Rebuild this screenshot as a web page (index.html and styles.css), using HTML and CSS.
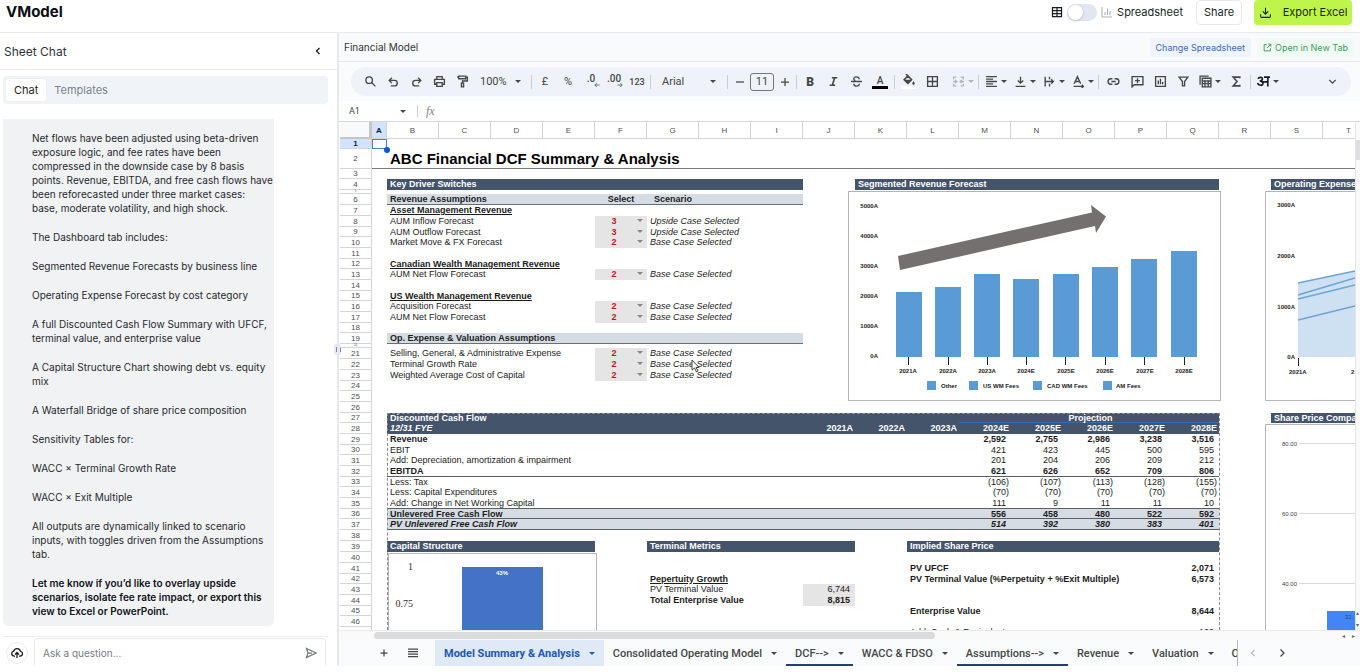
FILE: index.html
```
<!DOCTYPE html>
<html lang="en">
<head>
<meta charset="utf-8">
<title>VModel</title>
<link rel="stylesheet" href="styles.css">
</head>
<body>
<div class="app">
  <header class="topbar">
    <h1 class="brand">VModel</h1>
    <div class="topbar-actions">
      <label class="view-switch">
        <svg class="icon i12" viewBox="0 0 24 24"><path class="thick" d="M3 3h18v18H3zM3 9h18M3 15h18M12 3v18"/></svg>
        <input type="checkbox" role="switch" class="switch">
        <svg class="icon i12 muted" viewBox="0 0 24 24"><path d="M2 2v20h20M8 18v-6M13 18V5M18 18v-8"/></svg>
        <span>Spreadsheet</span>
      </label>
      <button class="btn btn-share">Share</button>
      <button class="btn btn-export"><svg class="icon i13" viewBox="0 0 24 24"><path d="M12 3v12M7 10l5 5 5-5M3 15v4a2 2 0 0 0 2 2h14a2 2 0 0 0 2-2v-4"/></svg>Export Excel</button>
    </div>
  </header>
  <div class="workspace">
    <aside class="chat">
      <div class="chat-head">
        <h2>Sheet Chat</h2>
        <button class="ghost" aria-label="Collapse"><svg class="icon i12 dark" viewBox="0 0 24 24"><path class="thick" d="M15 6l-6 6 6 6"/></svg></button>
      </div>
      <div class="chat-tabs">
        <button class="chat-tab active">Chat</button>
        <button class="chat-tab">Templates</button>
      </div>
      <div class="messages">
        <div class="message">
          <p>Net flows have been adjusted using beta-driven<br>exposure logic, and fee rates have been<br>compressed in the downside case by 8 basis<br>points. Revenue, EBITDA, and free cash flows have<br>been reforecasted under three market cases:<br>base, moderate volatility, and high shock.</p>
          <p>The Dashboard tab includes:</p>
          <p>Segmented Revenue Forecasts by business line</p>
          <p>Operating Expense Forecast by cost category</p>
          <p>A full Discounted Cash Flow Summary with UFCF,<br>terminal value, and enterprise value</p>
          <p>A Capital Structure Chart showing debt vs. equity<br>mix</p>
          <p>A Waterfall Bridge of share price composition</p>
          <p>Sensitivity Tables for:</p>
          <p>WACC × Terminal Growth Rate</p>
          <p>WACC × Exit Multiple</p>
          <p>All outputs are dynamically linked to scenario<br>inputs, with toggles driven from the Assumptions<br>tab.</p>
          <p class="strong">Let me know if you’d like to overlay upside<br>scenarios, isolate fee rate impact, or export this<br>view to Excel or PowerPoint.</p>
        </div>
      </div>
      <form class="composer">
        <button type="button" class="upload" aria-label="Upload"><svg class="icon i12 dark" viewBox="0 0 24 24"><path class="thick" d="M8 18H6a5 5 0 0 1-.5-9.900A7 7 0 0 1 19 9a4.500 4.500 0 0 1-1 9h-2M12 22V12M8 15l4-4 4 4"/></svg></button>
        <div class="ask">
          <input type="text" placeholder="Ask a question..." aria-label="Ask a question">
          <button type="button" class="ghost" aria-label="Send"><svg class="icon i12 mid" viewBox="0 0 24 24"><path class="thick" d="M3 3l19 9-19 9 3-9zM6 12h8"/></svg></button>
        </div>
      </form>
      <div class="splitter"></div>
    </aside>
    <main class="sheet-pane">
      <div class="doc-bar">
        <h2>Financial Model</h2>
        <div class="doc-actions">
          <button class="pill pill-blue">Change Spreadsheet</button>
          <a class="pill pill-green" href="#"><svg class="icon i9" viewBox="0 0 24 24"><path class="thick" d="M10 4H3v17h17v-7M14 3h7v7M21 3l-10 10"/></svg>Open in New Tab</a>
        </div>
      </div>
      <div class="toolbar-wrap">
        <div class="toolbar">
          <button class="tool" aria-label="Search"><svg class="icon i13" viewBox="0 0 24 24"><path class="thick" d="M14 14l7 7"/><circle class="thick" cx="9.500" cy="9.500" r="6"/></svg></button>
          <button class="tool" aria-label="Undo"><svg class="icon i13" viewBox="0 0 24 24"><path class="thick" d="M9 5L4 10l5 5M5 10h9a5 5 0 0 1 0 10H7"/></svg></button>
          <button class="tool" aria-label="Redo"><svg class="icon i13" viewBox="0 0 24 24"><path class="thick" d="M15 5l5 5-5 5M19 10h-9a5 5 0 0 0 0 10h7"/></svg></button>
          <button class="tool" aria-label="Print"><svg class="icon i13" viewBox="0 0 24 24"><path class="thick" d="M7 8V3h10v5M7 17H3V8h18v9h-4M7 14h10v7H7z"/></svg></button>
          <button class="tool" aria-label="Paint format"><svg class="icon i13" viewBox="0 0 24 24"><path class="thick" d="M5 2h13v5H5zM18 4h3v7h-9v4M10 15h4v7h-4zM2 4h3"/></svg></button>
          <div class="drop drop-zoom"><select aria-label="Zoom"><option>100%</option></select><i class="caret"></i></div>
          <i class="sep"></i>
          <button class="tool">£</button>
          <button class="tool">%</button>
          <button class="tool dec" aria-label="Decrease decimals">.0<svg class="icon i6" viewBox="0 0 24 24"><path class="heavy" d="M22 12H4M11 4l-8 8 8 8"/></svg></button>
          <button class="tool dec" aria-label="Increase decimals">.00<svg class="icon i6" viewBox="0 0 24 24"><path class="heavy" d="M2 12h18M13 4l8 8-8 8"/></svg></button>
          <button class="tool small">123</button>
          <i class="sep"></i>
          <div class="drop drop-font"><select aria-label="Font"><option>Arial</option></select><i class="caret"></i></div>
          <i class="sep"></i>
          <button class="tool tight" aria-label="Smaller"><svg class="icon i12" viewBox="0 0 24 24"><path class="thick" d="M4 12h16"/></svg></button>
          <input class="size" type="text" value="11" aria-label="Font size">
          <button class="tool tight" aria-label="Larger"><svg class="icon i12" viewBox="0 0 24 24"><path class="thick" d="M4 12h16M12 4v16"/></svg></button>
          <i class="sep"></i>
          <button class="tool bold">B</button>
          <button class="tool" aria-label="Italic"><svg class="icon i13" viewBox="0 0 24 24"><path class="heavy" d="M9 5h10M5 19h10M14 5l-4 14"/></svg></button>
          <button class="tool" aria-label="Strikethrough"><svg class="icon i13" viewBox="0 0 24 24"><path class="thick" d="M2 12h20M17 8c0-6-10-6-10-1 0 2 1 3 3 3M7 16c0 6 11 6 10 0"/></svg></button>
          <button class="tool wide color">A</button>
          <i class="sep"></i>
          <button class="tool" aria-label="Fill color"><svg class="icon i15" viewBox="0 0 24 24"><path class="thick" d="M8 0l3 3M11 3l6 6-6 6-6-6z"/><path class="solid" d="M5 9h12l-6 6zM20 11c3 4 2 6 0 6s-3-2 0-6z"/><path class="white" d="M0 22h24"/></svg></button>
          <button class="tool wide" aria-label="Borders"><svg class="icon i13" viewBox="0 0 24 24"><path class="thick" d="M3 3h18v18H3zM12 3v18M3 12h18"/></svg></button>
          <button class="tool menu merge" aria-label="Merge"><svg class="icon i13" viewBox="0 0 24 24"><path class="thick" d="M8 4H3v4M3 16v4h5M16 4h5v4M21 16v4h-5M2 12h7M6 9l3 3-3 3M22 12h-7M18 9l-3 3 3 3"/></svg><i class="caret"></i></button>
          <i class="sep"></i>
          <button class="tool menu" aria-label="Align"><svg class="icon i13" viewBox="0 0 24 24"><path class="thick" d="M2 3h20M2 7.500h13M2 12h20M2 16.500h13M2 21h20"/></svg><i class="caret"></i></button>
          <button class="tool menu" aria-label="Vertical align"><svg class="icon i13" viewBox="0 0 24 24"><path class="thick" d="M12 3v12M7 10l5 5 5-5M3 21h18"/></svg><i class="caret"></i></button>
          <button class="tool menu" aria-label="Wrap"><svg class="icon i13" viewBox="0 0 24 24"><path class="thick" d="M4 3v18M12 3v5M12 16v5M5 12h14M15 8l4 4-4 4"/></svg><i class="caret"></i></button>
          <button class="tool menu" aria-label="Rotate"><svg class="icon i13" viewBox="0 0 24 24"><path class="thick" d="M4 16L10 3l6 13M6 12h8M3 21h17M18 18l3 3-3 3"/></svg><i class="caret"></i></button>
          <i class="sep"></i>
          <button class="tool wide" aria-label="Link"><svg class="icon i13" viewBox="0 0 24 24"><path class="thick" d="M10 7H7a5 5 0 0 0 0 10h3M14 7h3a5 5 0 0 1 0 10h-3M8 12h8"/></svg></button>
          <button class="tool" aria-label="Comment"><svg class="icon i13" viewBox="0 0 24 24"><path class="thick" d="M2 22V3h20v15H6zM12 6v9M7.500 10.500h9"/></svg></button>
          <button class="tool" aria-label="Chart"><svg class="icon i13" viewBox="0 0 24 24"><path class="thick" d="M3 3h18v18H3zM8 17v-7M12 17V7M16 17v-4"/></svg></button>
          <button class="tool" aria-label="Filter"><svg class="icon i13" viewBox="0 0 24 24"><path class="thick" d="M4 4h16l-6 8v8h-4v-8z"/></svg></button>
          <button class="tool menu" aria-label="Table views"><svg class="icon i13" viewBox="0 0 24 24"><path class="thick" d="M2 18V2h16M6 6h16v16H6zM6 11h16M6 16h16M11 11v11M17 11v11"/></svg><i class="caret"></i></button>
          <button class="tool wide" aria-label="Functions"><svg class="icon i13" viewBox="0 0 24 24"><path class="heavy" d="M18 6V4H6l7 8-7 8h12v-2"/></svg></button>
          <i class="sep"></i>
          <button class="tool menu" aria-label="Input tools"><svg class="icon i13 dark" viewBox="0 0 24 24"><path class="heavy" d="M13 4h11M20 4v17M2 7c1-3 8-4 8 0 0 3-3 4-5 4 7 0 8 8 2 8-3 0-5-1-6-4M9 12c4 2 7 1 11 0"/></svg><i class="caret"></i></button>
          <button class="tool last" aria-label="More"><svg class="icon i13" viewBox="0 0 24 24"><path class="thick" d="M6 9l6 6 6-6"/></svg></button>
        </div>
      </div>
      <div class="formula-bar">
        <input class="name-box" type="text" value="A1" aria-label="Cell">
        <i class="caret"></i>
        <i class="sep"></i>
        <label class="fx" for="formula">fx</label>
        <input class="formula" id="formula" type="text">
      </div>
      <div class="grid-wrap">
        <div class="grid">
          <table class="sheet">
            <colgroup><col class="c-head"><col class="c-a"><col span="19" class="c"></colgroup>
            <thead><tr><th class="corner"></th><th class="sel">A</th><th>B</th><th>C</th><th>D</th><th>E</th><th>F</th><th>G</th><th>H</th><th>I</th><th>J</th><th>K</th><th>L</th><th>M</th><th>N</th><th>O</th><th>P</th><th>Q</th><th>R</th><th>S</th><th>T</th></tr></thead>
            <tbody>
              <tr><th class="sel">1</th><td class="cursor-cell"></td><td colspan="19"></td></tr>
              <tr class="title"><th>2</th><td></td><td colspan="19">ABC Financial DCF Summary &amp; Analysis</td></tr>
              <tr><th>3</th><td colspan="20"></td></tr>
              <tr><th>4</th><td></td><td class="head" colspan="8">Key Driver Switches</td><td></td><td class="head" colspan="7">Segmented Revenue Forecast</td><td></td><td class="head" colspan="2">Operating Expense</td></tr>
              <tr class="thin"><th>5</th><td colspan="20"></td></tr>
              <tr class="sub"><th>6</th><td></td><td class="band" colspan="4">Revenue Assumptions</td><td class="band center">Select</td><td class="band center">Scenario</td><td class="band" colspan="2"></td><td colspan="11"></td></tr>
              <tr><th>7</th><td></td><td class="under" colspan="19">Asset Management Revenue</td></tr>
              <tr><th>8</th><td></td><td colspan="4">AUM Inflow Forecast</td><td class="pick"><select aria-label="AUM inflow case"><option>3</option></select></td><td class="it" colspan="14">Upside Case Selected</td></tr>
              <tr><th>9</th><td></td><td colspan="4">AUM Outflow Forecast</td><td class="pick"><select aria-label="AUM outflow case"><option>3</option></select></td><td class="it" colspan="14">Upside Case Selected</td></tr>
              <tr><th>10</th><td></td><td colspan="4">Market Move &amp; FX Forecast</td><td class="pick"><select aria-label="Market move case"><option>2</option></select></td><td class="it" colspan="14">Base Case Selected</td></tr>
              <tr><th>11</th><td colspan="20"></td></tr>
              <tr><th>12</th><td></td><td class="under" colspan="19">Canadian Wealth Management Revenue</td></tr>
              <tr><th>13</th><td></td><td colspan="4">AUM Net Flow Forecast</td><td class="pick"><select aria-label="Canadian net flow case"><option>2</option></select></td><td class="it" colspan="14">Base Case Selected</td></tr>
              <tr><th>14</th><td colspan="20"></td></tr>
              <tr><th>15</th><td></td><td class="under" colspan="19">US Wealth Management Revenue</td></tr>
              <tr><th>16</th><td></td><td colspan="4">Acquisition Forecast</td><td class="pick"><select aria-label="Acquisition case"><option>2</option></select></td><td class="it" colspan="14">Base Case Selected</td></tr>
              <tr><th>17</th><td></td><td colspan="4">AUM Net Flow Forecast</td><td class="pick"><select aria-label="US net flow case"><option>2</option></select></td><td class="it" colspan="14">Base Case Selected</td></tr>
              <tr><th>18</th><td colspan="20"></td></tr>
              <tr class="sub"><th>19</th><td></td><td class="band" colspan="8">Op. Expense &amp; Valuation Assumptions</td><td colspan="11"></td></tr>
              <tr class="thin"><th>20</th><td colspan="20"></td></tr>
              <tr class="sub"><th>21</th><td></td><td colspan="4">Selling, General, &amp; Administrative Expense</td><td class="pick"><select aria-label="SG&amp;A case"><option>2</option></select></td><td class="it" colspan="14">Base Case Selected</td></tr>
              <tr><th>22</th><td></td><td colspan="4">Terminal Growth Rate</td><td class="pick"><select aria-label="Terminal growth case"><option>2</option></select></td><td class="it" colspan="14">Base Case Selected</td></tr>
              <tr><th>23</th><td></td><td colspan="4">Weighted Average Cost of Capital</td><td class="pick"><select aria-label="WACC case"><option>2</option></select></td><td class="it" colspan="14">Base Case Selected</td></tr>
              <tr><th>24</th><td colspan="20"></td></tr>
              <tr><th>25</th><td colspan="20"></td></tr>
              <tr><th>26</th><td colspan="20"></td></tr>
              <tr><th>27</th><td></td><td class="head" colspan="11">Discounted Cash Flow</td><td class="head projection" colspan="5">Projection</td><td></td><td class="head" colspan="2">Share Price Compar</td></tr>
              <tr class="years"><th>28</th><td></td><td class="head it" colspan="8">12/31 FYE</td><td class="head">2021A</td><td class="head">2022A</td><td class="head">2023A</td><td class="head">2024E</td><td class="head">2025E</td><td class="head">2026E</td><td class="head">2027E</td><td class="head">2028E</td><td colspan="3"></td></tr>
              <tr class="nums b"><th>29</th><td></td><td colspan="11">Revenue</td><td>2,592</td><td>2,755</td><td>2,986</td><td>3,238</td><td>3,516</td><td colspan="3"></td></tr>
              <tr class="nums"><th>30</th><td></td><td colspan="11">EBIT</td><td>421</td><td>423</td><td>445</td><td>500</td><td>595</td><td colspan="3"></td></tr>
              <tr class="nums"><th>31</th><td></td><td colspan="11">Add: Depreciation, amortization &amp; impairment</td><td>201</td><td>204</td><td>206</td><td>209</td><td>212</td><td colspan="3"></td></tr>
              <tr class="nums b line"><th>32</th><td></td><td colspan="11">EBITDA</td><td>621</td><td>626</td><td>652</td><td>709</td><td>806</td><td colspan="3"></td></tr>
              <tr class="nums neg"><th>33</th><td></td><td colspan="11">Less: Tax</td><td>(106)</td><td>(107)</td><td>(113)</td><td>(128)</td><td>(155)</td><td colspan="3"></td></tr>
              <tr class="nums neg"><th>34</th><td></td><td colspan="11">Less: Capital Expenditures</td><td>(70)</td><td>(70)</td><td>(70)</td><td>(70)</td><td>(70)</td><td colspan="3"></td></tr>
              <tr class="nums line"><th>35</th><td></td><td colspan="11">Add: Change in Net Working Capital</td><td>111</td><td>9</td><td>11</td><td>11</td><td>10</td><td colspan="3"></td></tr>
              <tr class="nums b line shade"><th>36</th><td></td><td colspan="11">Unlevered Free Cash Flow</td><td>556</td><td>458</td><td>480</td><td>522</td><td>592</td><td colspan="3"></td></tr>
              <tr class="nums b line shade slant"><th>37</th><td></td><td colspan="11">PV Unlevered Free Cash Flow</td><td>514</td><td>392</td><td>380</td><td>383</td><td>401</td><td colspan="3"></td></tr>
              <tr><th>38</th><td colspan="20"></td></tr>
              <tr class="sub"><th>39</th><td></td><td class="head" colspan="4">Capital Structure</td><td></td><td class="head" colspan="4">Terminal Metrics</td><td></td><td class="head" colspan="6">Implied Share Price</td><td colspan="3"></td></tr>
              <tr><th>40</th><td colspan="20"></td></tr>
              <tr><th>41</th><td colspan="11"></td><td class="b" colspan="5">PV UFCF</td><td class="b num">2,071</td><td colspan="3"></td></tr>
              <tr><th>42</th><td colspan="6"></td><td class="under" colspan="5">Pepertuity Growth</td><td class="b" colspan="5">PV Terminal Value (%Perpetuity + %Exit Multiple)</td><td class="b num">6,573</td><td colspan="3"></td></tr>
              <tr><th>43</th><td colspan="6"></td><td colspan="3">PV Terminal Value</td><td class="num grey">6,744</td><td colspan="10"></td></tr>
              <tr><th>44</th><td colspan="6"></td><td class="b" colspan="3">Total Enterprise Value</td><td class="b num grey">8,815</td><td colspan="10"></td></tr>
              <tr><th>45</th><td colspan="11"></td><td class="b" colspan="5">Enterprise Value</td><td class="b num">8,644</td><td colspan="3"></td></tr>
              <tr><th>46</th><td colspan="20"></td></tr>
              <tr><th>47</th><td colspan="11"></td><td colspan="5">Add: Cash &amp; Equivalents</td><td class="num">109</td><td colspan="3"></td></tr>
            </tbody>
          </table>

          <div class="print-area"></div>
          <i class="cell-handle"></i>

          <svg class="chart chart-revenue" width="373" height="211" viewBox="0 0 373 211">
            <rect class="frame" x="0.500" y="0.500" width="372" height="209"/>
            <g class="lbl end"><text x="30" y="17">5000A</text><text x="30" y="47">4000A</text><text x="30" y="77">3000A</text><text x="30" y="107">2000A</text><text x="30" y="137">1000A</text><text x="30" y="167">0A</text></g>
            <g class="bar"><rect x="48" y="101" width="26" height="65"/><rect x="87" y="96" width="26" height="70"/><rect x="126" y="83" width="26" height="83"/><rect x="165" y="88" width="26" height="78"/><rect x="205" y="83" width="26" height="83"/><rect x="244" y="76" width="26" height="90"/><rect x="283" y="68" width="26" height="98"/><rect x="323" y="60" width="26" height="106"/></g>
            <path class="tick" d="M60.500 166v8M100.500 166v8M139.500 166v8M178.500 166v8M217.500 166v8M257.500 166v8M296.500 166v8M336.500 166v8"/>
            <g class="lbl mid"><text x="60" y="182">2021A</text><text x="100" y="182">2022A</text><text x="139" y="182">2023A</text><text x="178" y="182">2024E</text><text x="218" y="182">2025E</text><text x="257" y="182">2026E</text><text x="297" y="182">2027E</text><text x="336" y="182">2028E</text></g>
            <g class="bar"><rect x="79" y="190" width="9" height="9"/><rect x="121" y="190" width="9" height="9"/><rect x="185" y="190" width="9" height="9"/><rect x="255" y="190" width="9" height="9"/></g>
            <g class="lbl"><text x="93" y="197">Other</text><text x="135" y="197">US WM Fees</text><text x="199" y="197">CAD WM Fees</text><text x="268" y="197">AM Fees</text></g>
            <path class="arrow" d="M50 65L244 21.500 243 14 258 25.500 248 42 247 35 52 79z"/>
          </svg>

          <svg class="chart chart-opex" width="90" height="211" viewBox="0 0 90 211">
            <path class="frame" d="M90 .5H.5v209H90"/>
            <g class="lbl end"><text x="30" y="16">3000A</text><text x="30" y="67">2000A</text><text x="30" y="118">1000A</text><text x="30" y="168">0A</text></g>
            <path class="area" d="M33 92L90 80v86H33z"/>
            <path class="series" d="M33 92L90 80M33 104L90 87M33 108L90 94M33 129L90 115"/>
            <path class="tick" d="M33.500 167v8"/>
            <g class="lbl"><text x="24" y="183">2021A</text><text x="86" y="183">2</text></g>
          </svg>

          <svg class="chart chart-price" width="90" height="207" viewBox="0 0 90 207">
            <path class="frame" d="M90 .5H.5V207"/>
            <g class="lbl light"><text x="17" y="22">80.00</text><text x="17" y="92">60.00</text><text x="17" y="162">40.00</text></g>
            <path class="rule" d="M34 19.500H90M34 89.500H90M34 159.500H90"/>
            <rect class="price-bar" x="62" y="187" width="28" height="20"/>
            <text class="price-lbl" x="80" y="195">32.</text>
          </svg>

          <svg class="chart chart-capital" width="209" height="77" viewBox="0 0 209 77">
            <path class="frame" d="M.5 77V.5h208V77"/>
            <g class="axis"><text x="25" y="17">1</text><text x="25" y="54">0.75</text></g>
            <rect class="cap-bar" x="74" y="14" width="81" height="63"/>
            <text class="cap-lbl" x="114" y="22">43%</text>
          </svg>

          <svg class="pointer" width="10" height="14" viewBox="0 0 10 14"><path d="M1 1v10l2.500-2 2 4 1.500-1-2-3.500h3z"/></svg>
        </div>
        <div class="vscroll"><i class="vthumb"></i><span class="varrows"><i>▴</i><i>▾</i></span></div>
      </div>
      <div class="hscroll"><div class="htrack"><i class="hthumb"></i></div><span class="harrows"><i>◂</i><i>▸</i></span></div>
      <nav class="tabs">
        <button class="tab-icon" aria-label="Add sheet"><svg class="icon i12" viewBox="0 0 24 24"><path class="thick" d="M12 5v14M5 12h14"/></svg></button>
        <button class="tab-icon" aria-label="All sheets"><svg class="icon i12" viewBox="0 0 24 24"><path class="thick" d="M2 4h20M2 9h20M2 14h20M2 19h20"/></svg></button>
        <div class="tab-list">
          <button class="tab active">Model Summary &amp; Analysis<i class="caret"></i></button>
          <button class="tab">Consolidated Operating Model<i class="caret"></i></button>
          <button class="tab marked">DCF--&gt;<i class="caret"></i></button>
          <button class="tab">WACC &amp; FDSO<i class="caret"></i></button>
          <button class="tab marked">Assumptions--&gt;<i class="caret"></i></button>
          <button class="tab">Revenue<i class="caret"></i></button>
          <button class="tab">Valuation<i class="caret"></i></button>
          <button class="tab">Other<i class="caret"></i></button>
        </div>
        <div class="tab-nav">
          <button class="tab-icon off" aria-label="Previous"><svg class="icon i12" viewBox="0 0 24 24"><path class="thick" d="M15 6l-6 6 6 6"/></svg></button>
          <button class="tab-icon" aria-label="Next"><svg class="icon i12" viewBox="0 0 24 24"><path class="thick" d="M9 5l7 7-7 7"/></svg></button>
        </div>
      </nav>
    </main>
  </div>
</div>
</body>
</html>
```
FILE: styles.css
```
* { box-sizing: border-box; }
body { margin: 0; background: #fff; font-family: Inter, "Open Sans", sans-serif; color: #1b1f24; overflow: hidden; }
button, input, select { font: inherit; color: inherit; background: none; border: 0; padding: 0; margin: 0; outline: 0; }
h1, h2, p { margin: 0; }
i { font-style: normal; }

.app { height: 100vh; padding-bottom: 6px; display: flex; flex-direction: column; }

.icon { fill: none; stroke: currentColor; stroke-width: 2; flex: none; display: block; }
.icon .thick { stroke-width: 2.5; }
.icon .heavy { stroke-width: 3; }
.icon .solid { fill: currentColor; stroke: none; }
.icon .white { stroke: #fff; stroke-width: 4; }
.i6 { width: 6px; height: 6px; }
.i9 { width: 9px; height: 9px; }
.i12 { width: 12px; height: 12px; }
.i13 { width: 13px; height: 13px; }
.i15 { width: 15px; height: 15px; }
.muted { color: #a9adb3; }
.mid { color: #70757c; }
.dark { color: #16191d; }
.ghost { display: flex; }

.topbar { flex: none; height: 33px; padding: 0 8px 8px 6px; border-bottom: 1px solid #e8eaed; display: flex; justify-content: space-between; align-items: center; }
.brand { font-size: 15px; line-height: 24px; font-weight: 700; color: #0c0f13; }
.topbar-actions { display: flex; align-items: center; font-size: 11px; }
.view-switch { display: flex; align-items: center; gap: 4px; margin-right: 13px; }
.switch { appearance: none; width: 30px; height: 17px; border-radius: 9px; background: #e1e6ef; display: flex; }
.switch::before { content: ""; width: 15px; height: 15px; margin: 1px; border-radius: 50%; background: #fff; box-shadow: 0 1px 3px #0003; }
.btn { height: 25px; border-radius: 4px; display: flex; align-items: center; justify-content: center; }
.btn-share { width: 46px; border: 1px solid #e6e8eb; margin-right: 12px; }
.btn-export { width: 98px; background: #bdf54b; gap: 11px; }

.workspace { flex: 1; min-height: 0; display: flex; }

.chat { flex: none; width: 339px; border-right: 2px solid #e6e8ee; display: flex; flex-direction: column; position: relative; }
.chat-head { flex: none; height: 37px; border-bottom: 1px solid #e9ebee; padding: 0 13px 0 4px; display: flex; align-items: center; justify-content: space-between; }
.chat-head h2 { font-size: 12px; font-weight: 400; color: #30343a; }
.chat-tabs { flex: none; margin: 6px 9px 0 3px; height: 28px; padding: 3px; border-radius: 4px; background: #f0f4f9; display: flex; font-size: 11px; color: #7a828d; }
.chat-tab { padding: 0 8px; border-radius: 3px; }
.chat-tab.active { background: #fff; color: #1b1f24; box-shadow: 0 0 2px #0001; }
.messages { flex: 1; min-height: 0; padding: 15px 0 0 3px; }
.message { width: 271px; padding: 12px 0 8px 29px; border-radius: 0 0 5px 5px; background: #f1f2f4; font-size: 10px; line-height: 14px; color: #26292e; white-space: nowrap; }
.message p + p { margin-top: 15px; }
.message .strong { font-weight: 600; color: #101317; }
.composer { flex: none; margin: 0 9px 0 3px; height: 30px; border-top: 1px solid #eceef0; padding-left: 3px; display: flex; gap: 6px; overflow: hidden; }
.upload { flex: none; width: 22px; height: 22px; margin-top: 5px; border: 1px solid #e8eaed; border-radius: 50%; display: flex; align-items: center; justify-content: center; }
.ask { flex: 1; margin: 1px 2px 0 0; height: 34px; border: 1px solid #e8eaed; border-radius: 4px; padding: 0 8px 4px; display: flex; align-items: center; }
.ask input { flex: 1; min-width: 0; font-size: 10px; }
.ask input::placeholder { color: #777c83; }
.splitter { position: absolute; right: -4px; top: 311px; width: 7px; height: 11px; border-radius: 2px; background: #e4e9f5; }
.splitter::before { content: ""; position: absolute; left: 2px; top: 3px; width: 3px; height: 5px; border: 1px solid #7f88a0; border-width: 0 1px; }

.sheet-pane { flex: 1; min-width: 0; display: flex; flex-direction: column; }
.doc-bar { flex: none; height: 29px; padding: 0 6px 0 5px; background: #f9fafb; border-bottom: 1px solid #e4e6e9; display: flex; justify-content: space-between; align-items: center; }
.doc-bar h2 { font-size: 10px; font-weight: 400; color: #30343a; }
.doc-actions { display: flex; gap: 6px; font-size: 9px; }
.pill { height: 19px; padding: 0 6px; border-radius: 3px; display: flex; align-items: center; gap: 3px; text-decoration: none; }
.pill-blue { background: #eff5fe; color: #4069b4; }
.pill-green { background: #f0fbf4; color: #3c9d5e; }

.toolbar-wrap { flex: none; height: 39px; padding: 5px 9px 0 12px; background: #f9fbfd; }
.toolbar { height: 29px; padding: 0 8px; border-radius: 15px; background: #eff3f9; display: flex; align-items: center; gap: 1px; font-family: Roboto, sans-serif; font-size: 11px; color: #444746; }
.tool { flex: none; width: 22px; height: 22px; display: flex; align-items: center; justify-content: center; white-space: nowrap; }
.tool.wide { width: 24px; }
.tool.tight { width: 19px; }
.tool.small { font-size: 9px; font-weight: 500; }
.tool.bold { font-weight: 900; font-size: 12px; }
.tool.dec { font-size: 10px; font-weight: 500; align-items: flex-start; flex-wrap: wrap; align-content: center; line-height: 8px; }
.tool.dec .icon { margin: -1px 0 0 12px; }
.tool.color { flex-direction: column; font-size: 10px; font-weight: 500; line-height: 11px; }
.tool.color::after { content: ""; width: 16px; height: 3px; background: #000; }
.tool.menu { width: 28px; justify-content: flex-end; gap: 3px; padding-right: 2px; }
.tool.merge { width: 31px; color: #b2b6ba; }
.tool.last { margin-left: auto; }
.caret { flex: none; width: 0; height: 0; border: 3px solid transparent; border-top-color: currentColor; border-bottom-width: 0; }
.sep { flex: none; width: 1px; height: 14px; margin: 0 1px; background: #c9cdd2; }
.drop { flex: none; display: flex; align-items: center; padding: 0 8px 0 6px; }
.drop select { appearance: none; flex: 1; min-width: 0; }
.drop-zoom { width: 55px; }
.drop-font { width: 72px; padding: 0 9px; }
.size { flex: none; width: 24px; height: 18px; border: 1px solid #747775; border-radius: 3px; text-align: center; }

.formula-bar { flex: none; height: 20px; display: flex; align-items: center; font-family: Roboto, sans-serif; font-size: 9px; color: #444746; padding-left: 10px; }
.name-box { width: 51px; }
.formula-bar .sep { margin: 0 8px 0 11px; height: 12px; }
.fx { font-family: "Liberation Serif", serif; font-style: italic; font-size: 12px; color: #80868b; }
.formula { flex: 1; min-width: 0; }

.grid-wrap { flex: 1; min-height: 0; display: flex; border-top: 1px solid #d5d7da; }
.grid { flex: 1; min-width: 0; position: relative; overflow: hidden; padding-left: 1px; }
.sheet { width: 1035px; table-layout: fixed; border-spacing: 0; font-family: "Liberation Sans", Arial, sans-serif; font-size: 9px; line-height: 9px; color: #1c1c1c; }
.c-head { width: 32px; }
.c-a { width: 15px; }
.c { width: 52px; }
.sheet th, .sheet td { padding: 0; height: 11px; white-space: nowrap; text-align: left; vertical-align: middle; }
.sheet tr:nth-child(3n) th, .sheet tr:first-child th { height: 10px; }
.sheet tr:nth-child(3n) td, .sheet tr:first-child td { height: 10px; }
.sheet td { padding-left: 3px; }
.sheet td:empty { padding: 0; }
.sheet th { font-weight: 400; font-size: 8px; text-align: center; color: #4c4f52; border: solid #d3d5d8; border-width: 0 1px 1px 0; }
.sheet thead tr:first-child th { height: 17px; }
.sheet .corner { background: #f8f9fa; border: solid #c4c6c8; border-width: 0 3px 2px 0; }
.sheet th.sel { background: #d3e3fd; color: #041e49; font-weight: 700; }
.sheet .cursor-cell { border: 1px solid #4a83c8; }
.cell-handle { position: absolute; left: 45px; top: 25px; width: 6px; height: 6px; border-radius: 50%; background: #0b57d0; }
.sheet .title th { height: 20px; }
.sheet .title td { height: 20px; font-size: 15px; line-height: 15px; font-weight: 700; color: #000; border-bottom: 1px solid #7b7b7b; }
.sheet .thin th { height: 4px; font-size: 3px; line-height: 3px; }
.sheet .thin td { height: 4px; line-height: 3px; }
.sheet tr.sub th, .sheet tr.sub td { height: 11px; }
.sheet .head { background: #44546a; color: #fff; font-weight: 700; }
.sheet .band { background: #d6dce4; font-weight: 700; border-bottom: 1px solid #6b7078; }
.sheet .center { text-align: center; padding: 0; }
.sheet .under { font-weight: 700; text-decoration: underline; }
.sheet .it { font-style: italic; }
.sheet .b, .sheet .b td { font-weight: 700; }
.sheet .grey { background: #e5e5e5; }
.sheet .pick { background: #e5e5e5; position: relative; padding: 0; }
.pick select { appearance: none; display: block; width: 52px; height: 10px; padding-right: 14px; text-align-last: center; line-height: 9px; font-weight: 700; color: #c0161c; }
.pick::after { content: ""; position: absolute; right: 4px; top: 3px; border: 3px solid transparent; border-top-color: #84888c; border-bottom-width: 0; }
.sheet .projection { text-align: center; box-shadow: inset 0 -1px #3d6aa8; }
.sheet .years td + td + td { text-align: right; padding: 0 2px 0 0; }
.sheet .nums td + td + td, .sheet .num { text-align: right; padding: 0 5px 0 0; }
.sheet .nums.neg td + td + td { padding-right: 2px; }
.line td:not(:nth-child(2)):not(:last-child) { box-shadow: inset 0 -1px #5c5f63; }
.shade td:not(:nth-child(2)):not(:last-child) { background: #d6dce4; }
.slant td { font-style: italic; }

.print-area { position: absolute; left: 48px; top: 291px; width: 833px; bottom: 0; border: 1px dashed #8a8a8a; border-bottom: 0; }
.chart { position: absolute; display: block; background: #fff; font-family: "Liberation Sans", Arial, sans-serif; }
.chart-revenue { left: 509px; top: 69px; }
.chart-opex { left: 926px; top: 69px; }
.chart-price { left: 926px; top: 302px; }
.chart-capital { left: 49px; top: 431px; }
.frame { fill: none; stroke: #b3b5b8; }
.lbl { font-size: 6px; font-weight: 700; fill: #222; }
.lbl.end { text-anchor: end; }
.lbl.mid { text-anchor: middle; }
.lbl.light { font-weight: 400; fill: #444; }
.bar { fill: #5b9bd5; }
.tick { stroke: #222; }
.arrow { fill: #757070; }
.area { fill: #cde1f2; }
.series { fill: none; stroke: #6fa3d4; stroke-width: 1.5; }
.rule { stroke: #d9d9d9; }
.price-bar { fill: #4285f4; }
.price-lbl { font-size: 6px; fill: #274b85; }
.axis { font-family: "Liberation Serif", serif; font-size: 10px; text-anchor: end; fill: #333; }
.cap-bar { fill: #4472c4; }
.cap-lbl { font-size: 6px; font-weight: 700; text-anchor: middle; fill: #fff; }
.pointer { position: absolute; left: 352px; top: 237px; fill: #fff; stroke: #444; }

.vscroll { flex: none; width: 5px; border-left: 1px solid #e3e5e8; background: #fafafa; display: flex; flex-direction: column; justify-content: space-between; padding: 18px 0 1px; }
.vthumb { height: 20px; background: #dcdee0; }
.varrows { display: flex; flex-direction: column; gap: 4px; font-size: 6px; line-height: 8px; color: #666; }
.hscroll { flex: none; height: 10px; border-top: 1px solid #e8eaec; background: #fafafa; padding: 1px 5px 1px 35px; display: flex; }
.htrack { flex: 1; display: flex; }
.hthumb { width: 58%; height: 7px; border-radius: 4px; background: #dadbdd; }
.harrows { display: flex; gap: 7px; font-size: 6px; line-height: 7px; color: #666; }

.tabs { flex: none; height: 26px; background: #f9fbfd; display: flex; font-family: Roboto, sans-serif; font-size: 11px; font-weight: 500; color: #444746; padding-left: 30px; }
.tab-icon { flex: none; width: 29px; display: flex; align-items: center; justify-content: center; }
.tab-icon.off { color: #b5b8bc; }
.tab-list { flex: 1; min-width: 0; margin-left: 8px; display: flex; overflow: hidden; border-right: 1px solid #b5b8bc; }
.tab { flex: none; padding: 2px 9px 0; display: flex; align-items: center; gap: 9px; white-space: nowrap; border-bottom: 2px solid transparent; }
.tab.active { background: #e0e9f8; color: #1d58b3; font-weight: 700; }
.tab.marked { border-bottom-color: #26406e; }
.tab-nav { flex: none; width: 122px; display: flex; }
```
